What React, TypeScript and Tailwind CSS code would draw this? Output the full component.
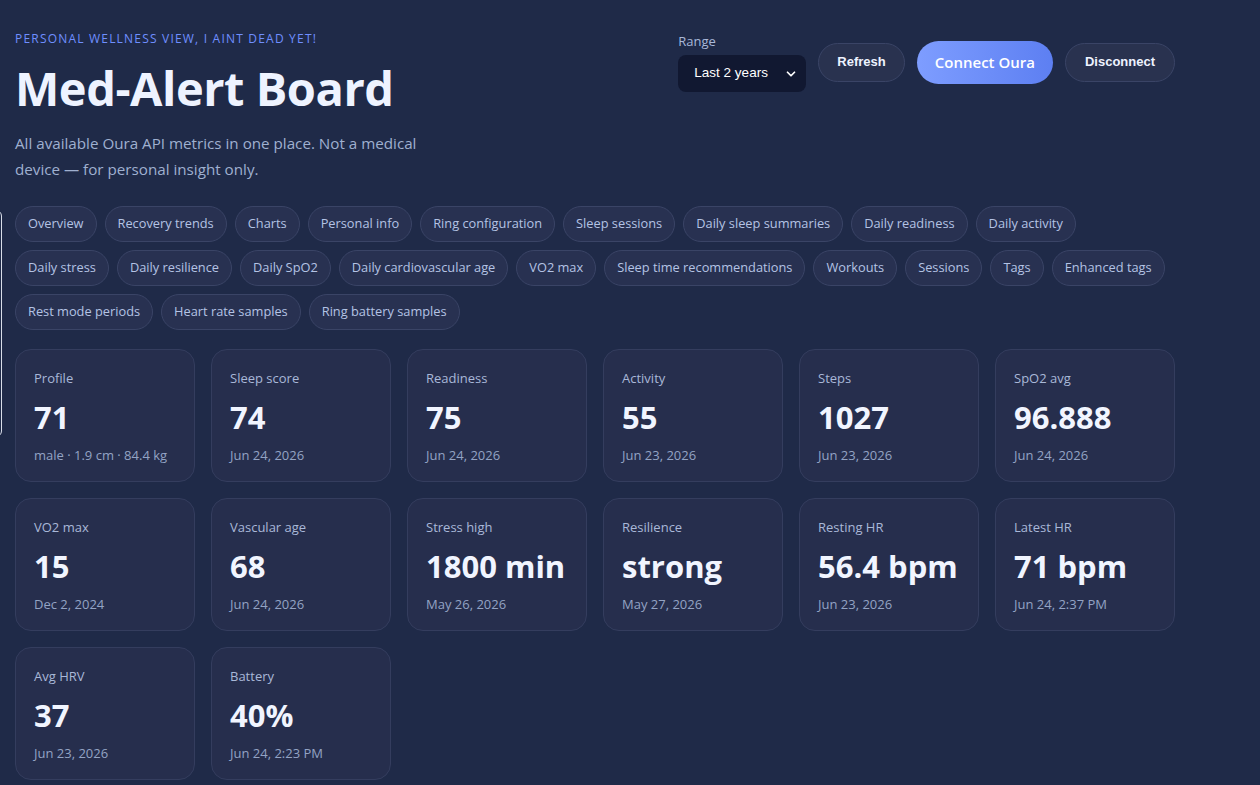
import { ChevronDown } from 'lucide-react';

const tabs = [
  'Overview',
  'Recovery trends',
  'Charts',
  'Personal info',
  'Ring configuration',
  'Sleep sessions',
  'Daily sleep summaries',
  'Daily readiness',
  'Daily activity',
  'Daily stress',
  'Daily resilience',
  'Daily SpO2',
  'Daily cardiovascular age',
  'VO2 max',
  'Sleep time recommendations',
  'Workouts',
  'Sessions',
  'Tags',
  'Enhanced tags',
  'Rest mode periods',
  'Heart rate samples',
  'Ring battery samples',
];

const metrics = [
  { label: 'Profile', value: '71', sub: 'male · 1.9 cm · 84.4 kg' },
  { label: 'Sleep score', value: '74', sub: 'Jun 24, 2026' },
  { label: 'Readiness', value: '75', sub: 'Jun 24, 2026' },
  { label: 'Activity', value: '55', sub: 'Jun 23, 2026' },
  { label: 'Steps', value: '1027', sub: 'Jun 23, 2026' },
  { label: 'SpO2 avg', value: '96.888', sub: 'Jun 24, 2026' },
  { label: 'VO2 max', value: '15', sub: 'Dec 2, 2024' },
  { label: 'Vascular age', value: '68', sub: 'Jun 24, 2026' },
  { label: 'Stress high', value: '1800 min', sub: 'May 26, 2026' },
  { label: 'Resilience', value: 'strong', sub: 'May 27, 2026' },
  { label: 'Resting HR', value: '56.4 bpm', sub: 'Jun 23, 2026' },
  { label: 'Latest HR', value: '71 bpm', sub: 'Jun 24, 2:37 PM' },
  { label: 'Avg HRV', value: '37', sub: 'Jun 23, 2026' },
  { label: 'Battery', value: '40%', sub: 'Jun 24, 2:23 PM' },
];

function MetricCard({ label, value, sub }: { label: string; value: string; sub: string }) {
  return (
    <div className="h-[133px] rounded-2xl border border-[#343d5e] bg-[#262e4d] px-[18px] pt-[19px]">
      <div className="text-[13px] leading-[18px] text-[#a9b8d8]">{label}</div>
      <div className="mt-[12px] text-[31px] font-bold leading-[36px] text-[#f1f5ff]">{value}</div>
      <div className="mt-[11px] text-[13px] leading-[18px] text-[#93a3c4]">{sub}</div>
    </div>
  );
}

export default function App() {
  return (
    <div
      className="relative min-h-[785px] overflow-hidden bg-[#1f2a48] pl-[15px]"
      style={{ fontFamily: '"Open Sans", "Noto Sans", sans-serif' }}
    >
      {/* offscreen panel edge */}
      <div className="absolute left-[-200px] top-[210px] h-[227px] w-[202px] rounded-md border border-[#d8dde8]" />

      <div className="w-[1160px]">
        {/* Header */}
        <div className="flex items-start justify-between pt-[31px]">
          <div>
            <div className="text-[12px] uppercase leading-[16px] tracking-[0.1em] text-[#6f8fff]">
              Personal wellness view, I aint dead yet!
            </div>
            <h1 className="mt-[13px] text-[47px] font-bold leading-[56px] tracking-[-0.01em] text-[#eef3ff]">
              Med-Alert Board
            </h1>
            <p className="mt-[14px] w-[420px] text-[15.2px] leading-[26px] text-[#9fb0d0]">
              All available Oura API metrics in one place. Not a medical device — for personal insight only.
            </p>
          </div>

          <div className="flex items-center gap-3 pt-[1px]">
            <div className="flex flex-col">
              <span className="text-[13px] leading-[18px] text-[#a9b8d8]">Range</span>
              <div
                className="mt-[5px] flex h-[37px] w-[128px] items-center justify-between rounded-lg bg-[#111831] pl-4 pr-2 text-[13.5px] text-white"
                style={{ fontFamily: '"Liberation Sans", Arial, sans-serif' }}
              >
                <span>Last 2 years</span>
                <ChevronDown size={14} strokeWidth={3} />
              </div>
            </div>
            <button
              className="h-[39px] rounded-full border border-[#3a4466] bg-[#29324f] px-[18px] text-[13px] font-bold text-[#eef3ff]"
              style={{ fontFamily: '"Liberation Sans", Arial, sans-serif' }}
            >
              Refresh
            </button>
            <button className="h-[43px] rounded-full bg-gradient-to-r from-[#7e9dff] to-[#5d7ff2] px-[18px] text-[15px] font-semibold text-white">
              Connect Oura
            </button>
            <button
              className="h-[39px] rounded-full border border-[#3a4466] bg-[#29324f] px-[19px] text-[13px] font-bold text-[#eef3ff]"
              style={{ fontFamily: '"Liberation Sans", Arial, sans-serif' }}
            >
              Disconnect
            </button>
          </div>
        </div>

        {/* Tabs */}
        <div className="mt-[24px] flex w-[1156px] flex-wrap gap-2">
          {tabs.map((t) => (
            <button
              key={t}
              className="h-9 rounded-full border border-[#3a4466] bg-[#283151] px-3 text-[12.8px] text-[#b4c3e4]"
            >
              {t}
            </button>
          ))}
        </div>

        {/* Metrics */}
        <div className="mt-[19px] grid grid-cols-6 gap-4">
          {metrics.map((m) => (
            <MetricCard key={m.label} {...m} />
          ))}
        </div>
      </div>
    </div>
  );
}
